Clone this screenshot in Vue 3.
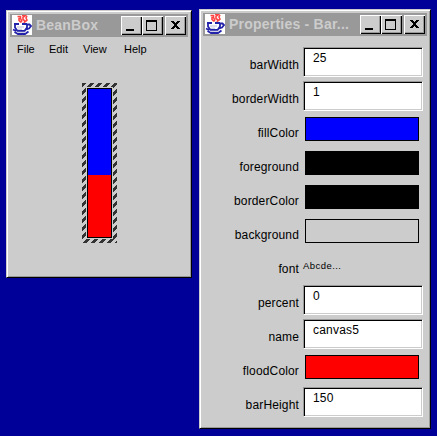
<script setup>
const menus = ['File', 'Edit', 'View', 'Help']

const properties = [
  { name: 'barWidth', type: 'text', value: '25' },
  { name: 'borderWidth', type: 'text', value: '1' },
  { name: 'fillColor', type: 'color', value: 'blue' },
  { name: 'foreground', type: 'color', value: 'black' },
  { name: 'borderColor', type: 'color', value: 'black' },
  { name: 'background', type: 'color', value: 'gray' },
  { name: 'font', type: 'font', value: 'Abcde...' },
  { name: 'percent', type: 'text', value: '0' },
  { name: 'name', type: 'text', value: 'canvas5' },
  { name: 'floodColor', type: 'color', value: 'red' },
  { name: 'barHeight', type: 'text', value: '150' },
]

const windows = [
  { id: 'beanbox', title: 'BeanBox' },
  { id: 'props', title: 'Properties - Bar...' },
]
</script>

<template>
  <main class="desktop">
    <section v-for="win in windows" :key="win.id" class="window" :class="win.id">
      <header class="titlebar">
        <svg class="java" width="20" height="20" viewBox="0 0 20 20" fill="none">
          <rect width="20" height="20" fill="#fff" />
          <path d="M5.500 1.500h3v2H7v2l2 2M10 .500h3.500l-2.500 2v2l2 1.500-1 2M15 1l-1 2 1 2-2 2M8.500 3.500l1 2v2" stroke="#f44" stroke-width="1.600" />
          <path d="M2 9h5M10 9h5M3 8.500v4l2.500 3.500h7l2.500-3.500v-4M1 14.500l3 1.500M2.500 17l3.500 2h7l3.500-2.500M15 9.500h2.500l1.500 1.500-2 2.500-3 1" stroke="#22a" stroke-width="1.800" />
          <path d="M5 12h7M6 14.200h4M5 17.200h9" stroke="#bbd" />
        </svg>
        <h1>{{ win.title }}</h1>
        <div class="controls">
          <button aria-label="Minimize">
            <svg width="20" height="19" shape-rendering="crispEdges"><path d="M5 13h8v2H5z" /></svg>
          </button>
          <button aria-label="Maximize">
            <svg width="20" height="19" shape-rendering="crispEdges"><path fill-rule="evenodd" d="M4 4h11v11H4zM5 6v8h9V6z" /></svg>
          </button>
          <button class="close" aria-label="Close">
            <svg width="20" height="19" shape-rendering="crispEdges"><path d="M6 5h3v1H6zM12 5h3v1h-3zM7 6h3v1H7zM11 6h3v1h-3zM8 7h5v1H8zM9 8h3v2H9zM8 10h5v1H8zM7 11h3v1H7zM11 11h3v1h-3zM6 12h3v1H6zM12 12h3v1h-3z" /></svg>
          </button>
        </div>
      </header>

      <template v-if="win.id === 'beanbox'">
        <nav><span v-for="menu in menus" :key="menu">{{ menu }}</span></nav>
        <div class="canvas">
          <svg width="35" height="160" shape-rendering="crispEdges">
            <defs>
              <pattern id="hatch" width="8" height="8" patternUnits="userSpaceOnUse">
                <path fill="#333" d="M0 0h4v1H0zM0 1h3v1H0zM7 1h1v1H7zM0 2h2v1H0zM6 2h2v1H6zM0 3h1v1H0zM5 3h3v1H5zM4 4h4v1H4zM3 5h4v1H3zM2 6h4v1H2zM1 7h4v1H1z" />
              </pattern>
            </defs>
            <path fill="url(#hatch)" fill-rule="evenodd" d="M0 0h35v160H0zM4 4v152h27V4z" />
            <path d="M5 5h25v150H5z" />
            <path fill="#00f" d="M6 6h23v86H6z" />
            <path fill="#f00" d="M6 92h23v62H6z" />
          </svg>
        </div>
      </template>

      <div v-else class="properties">
        <div v-for="prop in properties" :key="prop.name" class="property">
          <span class="label">{{ prop.name }}</span>
          <span v-if="prop.type === 'text'" class="field">{{ prop.value }}</span>
          <span v-else-if="prop.type === 'color'" class="swatch" :class="prop.value"></span>
          <span v-else class="sample">{{ prop.value }}</span>
        </div>
      </div>
    </section>
  </main>
</template>

<style>
body { margin: 0; background: #009; }
</style>

<style scoped>
* { box-sizing: border-box; }
.desktop {
  display: flex;
  align-items: flex-start;
  gap: 7px;
  width: 437px;
  height: 436px;
  padding: 9px 6px 0;
  background: #009;
  color: #000;
  font-family: "Liberation Sans", Arial, sans-serif;
}
.window {
  flex: none;
  padding: 2px;
  background: #ccc;
  border: 1px solid;
  border-color: #ccc #000 #000 #ccc;
  box-shadow: inset 1px 1px #fff, inset -1px -1px #999;
}
.beanbox { width: 186px; height: 268px; margin-top: 1px; }
.props { width: 232px; height: 420px; }
.titlebar {
  display: flex;
  height: 23px;
  margin: 1px;
  padding: 1px 2px;
  background: #999;
}
.java { flex: none; }
h1 {
  flex: 1;
  margin: 0 0 0 4px;
  color: #ccc;
  font-size: 14px;
  line-height: 21px;
  letter-spacing: .22px;
  white-space: nowrap;
}
.controls { display: flex; padding-top: 1px; }
button {
  width: 21px;
  height: 19px;
  padding: 0;
  border: 0;
  background: #ccc;
  box-shadow: inset 1px 1px #fff, inset -1px -1px #000, inset -2px -2px #999;
}
button svg { display: block; }
.close { margin-left: 2px; }
nav {
  display: grid;
  grid-template-columns: 32px 34px 41px 30px;
  padding: 4px 8px 0;
  font-size: 11px;
  line-height: 14px;
}
.canvas { display: flex; padding: 27px 0 0 73px; }
.properties {
  display: flex;
  flex-direction: column;
  gap: 4px;
  padding-top: 10px;
}
.property { display: flex; height: 30px; }
.label {
  width: 97px;
  margin-right: 4px;
  padding-top: 11px;
  text-align: right;
  font-size: 12px;
  line-height: 15px;
  letter-spacing: .15px;
}
.field {
  width: 120px;
  height: 30px;
  padding: 3px 9px;
  background: #fff;
  border: 1px solid;
  border-color: #999 #fff #fff #999;
  box-shadow: inset 1px 1px #000, inset -1px -1px #ccc;
  font-size: 12px;
  line-height: 15px;
  letter-spacing: .2px;
}
.swatch {
  width: 114px;
  height: 24px;
  margin: 2px;
  border: 1px solid #000;
}
.blue { background: #00f; }
.black { background: #000; }
.gray { background: #ccc; }
.red { background: #f00; }
.sample { padding-top: 8px; font-size: 9.5px; line-height: 13px; letter-spacing: .45px; }
</style>
